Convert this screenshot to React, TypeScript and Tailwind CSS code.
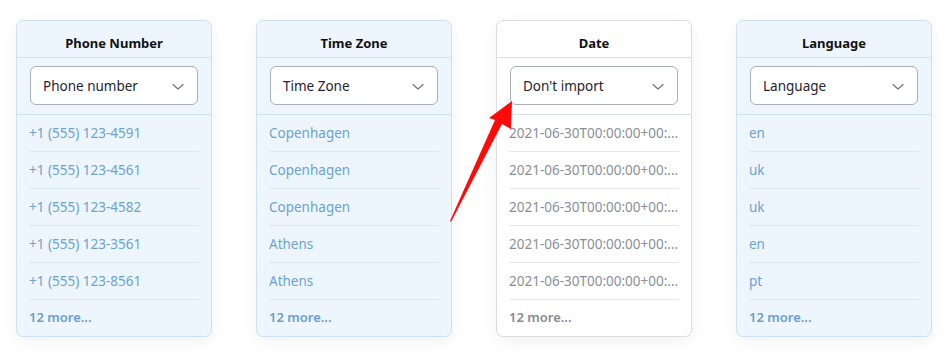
import React from "react";

type Col = {
  title: string;
  select: string;
  rows: string[];
  active: boolean;
};

const cols: Col[] = [
  {
    title: "Phone Number",
    select: "Phone number",
    rows: ["+1 (555) 123-4591", "+1 (555) 123-4561", "+1 (555) 123-4582", "+1 (555) 123-3561", "+1 (555) 123-8561"],
    active: true,
  },
  {
    title: "Time Zone",
    select: "Time Zone",
    rows: ["Copenhagen", "Copenhagen", "Copenhagen", "Athens", "Athens"],
    active: true,
  },
  {
    title: "Date",
    select: "Don't import",
    rows: Array(5).fill("2021-06-30T00:00:00+00:..."),
    active: false,
  },
  {
    title: "Language",
    select: "Language",
    rows: ["en", "uk", "uk", "en", "pt"],
    active: true,
  },
];

function Chevron() {
  return (
    <svg width="12" height="8" viewBox="0 0 12 8" fill="none">
      <path d="M1 1.5L6 6L11 1.5" stroke="#6b7280" strokeWidth="1.2" strokeLinecap="round" strokeLinejoin="round" />
    </svg>
  );
}

function Card({ c }: { c: Col }) {
  const a = c.active;
  return (
    <div
      className={
        "w-[196px] shrink-0 rounded-[7px] border shadow-[0_4px_18px_rgba(0,0,0,0.06)] " +
        (a ? "bg-[#edf6ff] border-[#cde0f4]" : "bg-white border-[#dadde2]")
      }
    >
      <div className={"h-[37px] flex items-center justify-center border-b text-[13px] font-bold text-[#111] pt-[9px] " + (a ? "border-[#cde0f4]" : "border-[#dadde2]")}>
        {c.title}
      </div>
      <div className={"h-[57px] px-[13px] py-[8px] border-b " + (a ? "border-[#cde0f4]" : "border-[#dadde2]")}>
        <div className="h-[39px] rounded-[6px] border border-[#a9b0b9] bg-white flex items-center justify-between pl-[12px] pr-[13px] pt-[2px] text-[13.5px] text-[#1f2430]">
          <span>{c.select}</span>
          <Chevron />
        </div>
      </div>
      <div className="px-[12px]">
        {c.rows.map((r, i) => (
          <div
            key={i}
            className={
              "h-[37px] flex items-center border-b text-[13.5px] whitespace-nowrap overflow-hidden " +
              (a ? "border-[#d9e8f6] text-[#6ea2d0]" : "border-[#e4e6ea] text-[#8a8f97]")
            }
          >
            <span className="block w-full overflow-hidden text-ellipsis whitespace-nowrap">{r}</span>
          </div>
        ))}
        <div className={"h-[36px] flex items-center text-[13px] font-semibold " + (a ? "text-[#6b9dcd]" : "text-[#858a92]")}>
          12 more...
        </div>
      </div>
    </div>
  );
}

export default function App() {
  return (
    <div className="relative w-[944px] h-[352px] bg-white overflow-hidden" style={{ fontFamily: '"Noto Sans", "Open Sans", sans-serif' }}>
      <div className="flex gap-[44px] pl-[16px] pt-[20px]">
        {cols.map((c) => (
          <Card key={c.title} c={c} />
        ))}
      </div>
      <svg className="absolute left-0 top-0 pointer-events-none" width="944" height="352" viewBox="0 0 944 352">
        <polygon points="512,101 511,129 502,124 451,222 450,221 495,120 489,118" fill="#ff0a0a" />
      </svg>
    </div>
  );
}
